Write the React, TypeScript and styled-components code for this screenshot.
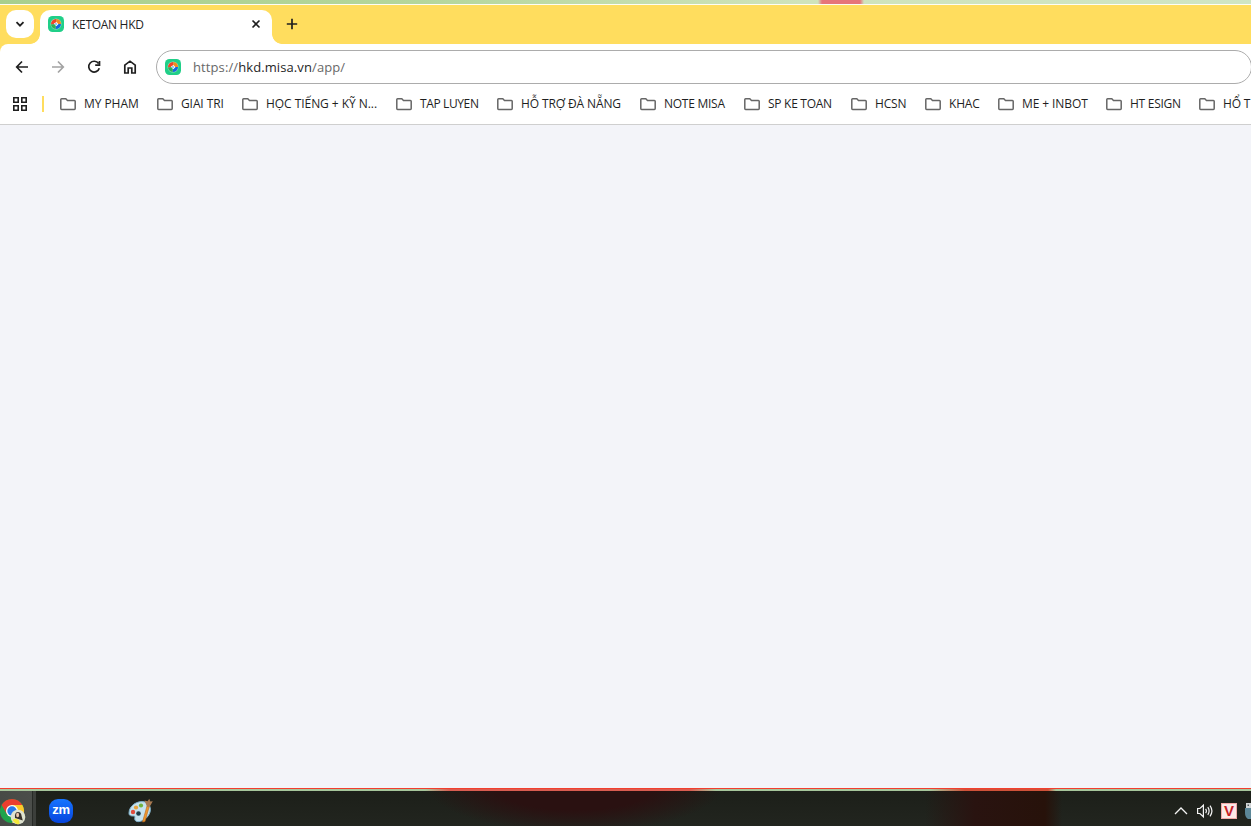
import React from "react";
import styled, { createGlobalStyle } from "styled-components";

const GlobalStyle = createGlobalStyle`
  * { box-sizing: border-box; }
  html, body { margin: 0; padding: 0; overflow: hidden; }
  body { font-family: "Open Sans", "Noto Sans", sans-serif; color: #1f1f1f; }
  svg { display: block; flex: none; }
`;

const Screen = styled.div`
  width: 1251px;
  height: 826px;
  display: flex;
  flex-direction: column;
  overflow: hidden;
  background: #fff;
`;

const WallpaperStrip = styled.div`
  height: 5px;
  flex: none;
  border-bottom: 1px solid #fdfdf5;
  background: linear-gradient(90deg, transparent 818px, #e6757a 822px, #e6757a 860px, transparent 864px),
    linear-gradient(90deg, #a8cf8e 0, #b4d69c 420px, #cfe3bb 800px, #cfe5c4 100%);
`;

const TabStrip = styled.div`
  height: 39px;
  flex: none;
  display: flex;
  align-items: flex-start;
  padding: 5px 0 0 6px;
  background: #ffdd5e;
`;

const TabSearch = styled.button`
  width: 28px;
  height: 28px;
  padding: 0;
  border: 0;
  border-radius: 10px;
  background: #fff;
  display: flex;
  align-items: center;
  justify-content: center;
`;

const Tab = styled.div`
  position: relative;
  width: 232px;
  height: 34px;
  margin-left: 6px;
  padding: 0 10px 6px 8px;
  display: flex;
  align-items: center;
  gap: 8px;
  border-radius: 10px 10px 0 0;
  background: #fff;

  &::before,
  &::after {
    content: "";
    position: absolute;
    bottom: 0;
    width: 10px;
    height: 10px;
  }
  &::before {
    left: -10px;
    background: radial-gradient(circle at 0 0, transparent 9.5px, #fff 10.2px);
  }
  &::after {
    right: -10px;
    background: radial-gradient(circle at 100% 0, transparent 9.5px, #fff 10.2px);
  }
`;

const FittedText = styled.span<{ $width: number; $spacing?: number }>`
  width: ${(p) => p.$width}px;
  font-size: 12px;
  letter-spacing: ${(p) => p.$spacing ?? -0.2}px;
  line-height: 18px;
  white-space: nowrap;
`;

const TabTitle = styled(FittedText)`
  padding-top: 1px;
  line-height: 19px;
`;

const NewTab = styled.div`
  margin: 8px 0 0 14px;
`;

const Spacer = styled.div`
  flex: 1;
`;

const ToolbarArea = styled.div`
  height: 81px;
  flex: none;
  background: linear-gradient(#ffdd5e, #ffdd5e) 0 0 / 8px 8px no-repeat;
  border-bottom: 1px solid #cfcfcf;
`;

const ToolbarBody = styled.div`
  height: 80px;
  background: #fff;
  border-top-left-radius: 8px;
`;

const NavRow = styled.div`
  height: 46px;
  display: flex;
  align-items: center;
  padding-left: 12px;
`;

const NavButtons = styled.div`
  width: 144px;
  flex: none;
  display: flex;
  gap: 16px;
`;

const AddressBar = styled.div`
  width: 1096px;
  height: 34px;
  flex: none;
  display: flex;
  align-items: center;
  padding-left: 8px;
  border: 1px solid #acacac;
  border-radius: 17px;
  background: #fff;
`;

const Url = styled.span`
  margin-left: 12px;
  font-size: 13px;
  letter-spacing: 0.1px;
  line-height: 20px;
  color: #686868;
  b { font-weight: 400; color: #1f1f1f; }
`;

const BookmarksBar = styled.div`
  height: 28px;
  display: flex;
  align-items: center;
  padding-left: 12px;
`;

const Divider = styled.div`
  width: 2px;
  height: 16px;
  flex: none;
  margin: 0 16px 0 14px;
  background: #ffdd5e;
`;

const Bookmark = styled.div<{ $pitch: number }>`
  width: ${(p) => p.$pitch}px;
  flex: none;
  display: flex;
  align-items: center;
  gap: 8px;
`;

const Page = styled.main`
  flex: 1;
  background: #f3f4f9;
`;

const WindowEdge = styled.div`
  height: 3px;
  flex: none;
  border-top: 1px solid #f23d2e;
  background: linear-gradient(90deg, transparent 425px, #d95c50 450px, #d95c50 690px, transparent 716px, transparent 930px, #cf5138 965px, #cf5138 1048px, transparent 1056px), #a6c59b;
`;

const Taskbar = styled.footer`
  height: 35px;
  flex: none;
  display: flex;
  align-items: center;
  background: radial-gradient(ellipse 150px 50px at 575px -8px, #2a1111 55%, transparent 100%),
    linear-gradient(90deg, transparent 925px, #291310 975px, #27120a 1045px, transparent 1062px),
    linear-gradient(#1c1f19, #22251f);
`;

const ChromeSlot = styled.div`
  width: 36px;
  height: 35px;
  padding-top: 7px;
  background: linear-gradient(90deg, #474a46 0, #4b4e4a 32px, #272a26 32px, #272a26 33px, #3c3f3b 33px);
`;

const ZoomBadge = styled.div`
  width: 24px;
  height: 24px;
  margin: 5px 0 0 13px;
  border-radius: 9px;
  background: linear-gradient(#1674ff, #0745dd);
  color: #fff;
  font: 700 13px/21px "Liberation Sans", sans-serif;
  letter-spacing: -0.3px;
  text-align: center;
`;

const PaintSlot = styled.div`
  margin: 4px 0 0 55px;
`;

const Tray = styled.div`
  width: 77px;
  display: flex;
  align-items: center;
  margin-top: 5px;
`;

const VBadge = styled.div`
  width: 16px;
  height: 16px;
  margin-left: 7px;
  border: 1px solid #f0aaa8;
  background: #fbe9e7;
  color: #c71f27;
  font: 700 15px/14px "Liberation Sans", sans-serif;
  text-align: center;
`;

const AppMark = () => (
  <svg width="16" height="16" viewBox="0 0 16 16">
    <rect width="16" height="16" rx="4.5" fill="#20cf88" />
    <circle cx="8" cy="8" r="5.5" fill="#9adfc2" />
    <path d="M8 8 3 8.6A5 5 0 0 1 8.5 3Z" fill="#f0452a" />
    <path d="M8 8 8.5 3A5 5 0 0 1 13 8Z" fill="#f48a1f" />
    <path d="M8 8H13A5 5 0 0 1 7.5 13Z" fill="#1268e0" />
    <path d="M8 8 7.5 13A5 5 0 0 1 3 8.6Z" fill="#2fae57" />
    <path d="M5.8 7.4 8.6 5.9 10.4 8.2 8.2 10.2Z" fill="#fff" />
    <path d="M6.6 7.4 8.4 6.9 9.2 8.4 7.6 8.9Z" fill="#7db4ee" />
  </svg>
);

const Glyph = ({ d, color = "#1f1f1f", size = 20, weight = 1.7 }: { d: string; color?: string; size?: number; weight?: number }) => (
  <svg width={size} height={size} viewBox={`0 0 ${size} ${size}`} fill="none" stroke={color} strokeWidth={weight}>
    <path d={d} />
  </svg>
);

const Folder = () => (
  <svg width="16" height="14" viewBox="0 0 16 14" fill="none" stroke="#666" strokeWidth="1.5">
    <path d="M.8 2.6Q.8 1.8 1.6 1.8H5.8L7.5 3.5H14.4Q15.2 3.5 15.2 4.3V11.6Q15.2 12.4 14.4 12.4H1.6Q.8 12.4.8 11.6Z" />
  </svg>
);

const ChromeIcon = () => (
  <svg width="28" height="28" viewBox="0 0 28 28">
    <circle cx="12" cy="13" r="12" fill="#20a34b" />
    <path d="M1.6 7A12 12 0 0 1 22.4 7H12L6.8 16Z" fill="#ea3d2f" />
    <path d="M22.4 7A12 12 0 0 1 12 25L17.2 16 12 7Z" fill="#fcc92b" />
    <circle cx="12" cy="13" r="6" fill="#fff" />
    <circle cx="12" cy="13" r="4.7" fill="#2878e8" />
    <circle cx="18" cy="19" r="7.3" fill="#dfe3cf" />
    <path d="M15 20q-.6-5.5 2.6-6 3.600 0 4 4l1.200 4.500-3-1Z" fill="#37312c" />
    <ellipse cx="17.600" cy="17" rx="1.500" ry="2.200" fill="#efc7ac" />
    <path d="M12.500 22q2-2 4.500-1 3 1 2.500 5-4 1-7-4Z" fill="#f4e83a" />
  </svg>
);

const PaintIcon = () => (
  <svg width="25" height="25" viewBox="0 0 25 25">
    <path d="M1 15C1 8 9 2 17 4c6 2 7 9 3 14-4 6-12 7-13 4-1-2 1-4-1-4-3 0-5 0-5-3Z" fill="#c6e2ef" stroke="#7daec8" />
    <circle cx="5" cy="14" r="2.2" fill="#e14b3d" />
    <circle cx="8" cy="9.500" r="2.100" fill="#e9a33d" />
    <circle cx="13" cy="7.500" r="2.100" fill="#70b33e" />
    <circle cx="10.500" cy="15.500" r="2.300" fill="#1f3d49" />
    <path d="M14.500 24 19 8l2.200.8L17 23.500Z" fill="#ef962c" stroke="#b5651d" strokeWidth=".6" />
    <path d="M18.900 8.500 16.500 2.500l3 .8 1.800-2.500 1 2.600 2.500-.2-3.300 5.800Z" fill="#a97a52" />
  </svg>
);

const SpeakerIcon = () => (
  <svg width="18" height="16" viewBox="0 0 18 16" fill="none" stroke="#f4f4f4" strokeWidth="1.2">
    <path d="M1.6 5.5H3.900L7.400 2.200V13.800L3.900 10.500H1.600Z" />
    <path d="M9.600 5.800Q11.200 8 9.600 10.200M11.800 4.200Q14.400 8 11.800 11.800M14 2.700Q17.900 8 14 13.300" />
  </svg>
);

const UsbIcon = () => (
  <svg width="6" height="18" viewBox="0 0 6 18">
    <path d="M1 1H6V6H1Z" fill="#d1d4d5" />
    <path d="M2.500 2.500H4V4H2.500Z" fill="#4c5558" />
    <path d="M0 6H6V17H3Q0 15 0 11Z" fill="#5c8798" />
  </svg>
);

const bookmarks: { label: string; pitch: number; text: number; spacing: number }[] = [
  { label: "MY PHAM", pitch: 97, text: 55, spacing: -0.06 },
  { label: "GIAI TRI", pitch: 85, text: 43, spacing: -0.1 },
  { label: "HỌC TIẾNG + KỸ N...", pitch: 154, text: 112, spacing: -0.05 },
  { label: "TAP LUYEN", pitch: 101, text: 59, spacing: -0.38 },
  { label: "HỖ TRỢ ĐÀ NẴNG", pitch: 143, text: 101, spacing: -0.12 },
  { label: "NOTE MISA", pitch: 104, text: 62, spacing: -0.26 },
  { label: "SP KE TOAN", pitch: 107, text: 65, spacing: -0.28 },
  { label: "HCSN", pitch: 74, text: 32, spacing: -0.2 },
  { label: "KHAC", pitch: 73, text: 31, spacing: -0.2 },
  { label: "ME + INBOT", pitch: 108, text: 66, spacing: -0.1 },
  { label: "HT ESIGN", pitch: 93, text: 51, spacing: -0.26 },
  { label: "HỔ T", pitch: 52, text: 28, spacing: -0.2 },
];

export default function App() {
  return (
    <Screen>
      <GlobalStyle />
      <WallpaperStrip />
      <TabStrip>
        <TabSearch aria-label="Search tabs">
          <Glyph size={10} d="M1.5 3.2 5 6.7 8.5 3.2" weight={1.8} />
        </TabSearch>
        <Tab>
          <AppMark />
          <TabTitle $width={72} $spacing={-0.3}>KETOAN HKD</TabTitle>
          <Spacer />
          <Glyph size={12} d="M2.5 2.5 9.5 9.5M9.5 2.5 2.5 9.5" weight={1.6} />
        </Tab>
        <NewTab>
          <Glyph size={12} d="M6 .8V11.2M.8 6H11.2" />
        </NewTab>
      </TabStrip>
      <ToolbarArea>
        <ToolbarBody>
          <NavRow>
            <NavButtons>
              <Glyph d="M16 10H5M10 4.5 4.7 10 10 15.5" />
              <Glyph color="#a3a3a3" d="M4 10H15M10 4.5 15.3 10 10 15.5" />
              <Glyph d="M14.6 6.6A5.4 5.4 0 1 0 15.3 11.2M15.5 4V8.2H11.2" />
              <Glyph d="M4.8 16V8.2L10 4.2 15.2 8.2V16H11.8V11H8.2V16Z" />
            </NavButtons>
            <AddressBar>
              <AppMark />
              <Url>https://<b>hkd.misa.vn</b>/app/</Url>
            </AddressBar>
          </NavRow>
          <BookmarksBar>
            <Glyph size={16} d="M1.8 1.8H6.2V6.2H1.8ZM9.8 1.8H14.2V6.2H9.8ZM1.8 9.8H6.2V14.2H1.8ZM9.8 9.8H14.2V14.2H9.8Z" weight={1.6} />
            <Divider />
            {bookmarks.map((b) => (
              <Bookmark key={b.label} $pitch={b.pitch}>
                <Folder />
                <FittedText $width={b.text} $spacing={b.spacing}>{b.label}</FittedText>
              </Bookmark>
            ))}
          </BookmarksBar>
        </ToolbarBody>
      </ToolbarArea>
      <Page />
      <WindowEdge />
      <Taskbar>
        <ChromeSlot><ChromeIcon /></ChromeSlot>
        <ZoomBadge>zm</ZoomBadge>
        <PaintSlot><PaintIcon /></PaintSlot>
        <Spacer />
        <Tray>
          <Glyph size={14} color="#f4f4f4" d="M1 10 7 4 13 10" weight={1.3} />
          <Spacer />
          <SpeakerIcon />
          <VBadge>V</VBadge>
          <Spacer />
          <UsbIcon />
        </Tray>
      </Taskbar>
    </Screen>
  );
}
